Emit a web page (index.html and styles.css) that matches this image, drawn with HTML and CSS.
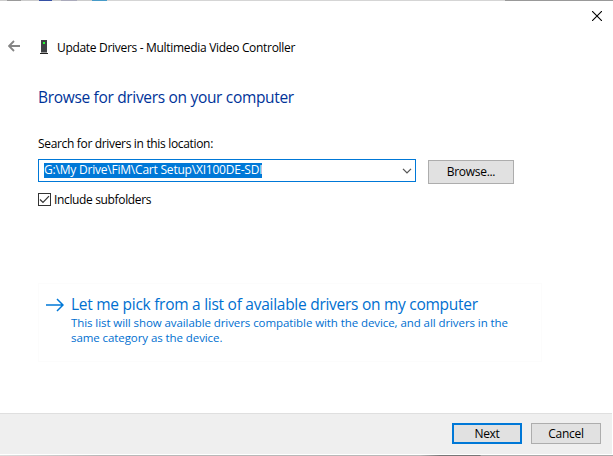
FILE: index.html
```html
<!DOCTYPE html>
<html lang="en">
<head>
<meta charset="utf-8">
<title>Update Drivers</title>
<link rel="stylesheet" href="styles.css">
</head>
<body>
<div class="strip-top"></div>
<main class="dialog">
  <div class="titlebar">
    <button class="close" aria-label="Close"><svg width="10" height="10" viewBox="0 0 10 10"><path d="M0 0L10 10M10 0L0 10"/></svg></button>
  </div>
  <header class="header">
    <svg class="back" width="12" height="12" viewBox="0 0 12 12"><path d="M12 6H1M6 1L1 6L6 11"/></svg>
    <svg class="device" width="8" height="14" viewBox="0 0 8 14" shape-rendering="crispEdges"><path fill="#3e4144" d="M1 0H7V12H1Z"/><path fill="#222" d="M0 13H8V14H0Z"/><path fill="#999" d="M1 12H7V13H1Z"/><path fill="#22ff33" d="M3 2H5V4H3Z"/></svg>
    <span class="title">Update Drivers - Multimedia Video Controller</span>
  </header>
  <section class="content">
    <h1 class="heading"><span>Browse for drivers on your computer</span></h1>
    <label class="label"><span>Search for drivers in this location:</span></label>
    <div class="row">
      <div class="combo"><span class="selected">G:\My Drive\FiM\Cart Setup\XI100DE-SDI</span>
        <svg width="10" height="6" viewBox="0 0 10 6"><path d="M1 .9L5 4.9L9 .9"/></svg></div>
      <button class="btn browse"><span>Browse...</span></button>
    </div>
    <div class="check"><span class="box"><svg width="11" height="11" viewBox="0 0 11 11"><path d="M1 5.5L4 8.5L10 2.2"/></svg></span><span class="check-text">Include subfolders</span></div>
    <div class="command">
      <svg width="18" height="14" viewBox="0 0 18 14"><path d="M0 7H17M11 1L17 7L11 13"/></svg>
      <div class="command-body">
        <div class="command-title"><span>Let me pick from a list of available drivers on my computer</span></div>
        <div class="note"><span class="n1">This list will show available drivers compatible with the device, and all drivers in the</span><br><span class="n2">same category as the device.</span></div>
      </div>
    </div>
  </section>
</main>
<footer class="footer">
  <button class="btn primary"><span>Next</span></button>
  <button class="btn cancel"><span>Cancel</span></button>
</footer>
<div class="strip-bottom"></div>
</body>
</html>
```
FILE: styles.css
```css
* { box-sizing: border-box; }
body { margin: 0; width: 613px; height: 456px; overflow: hidden; background: #fff; color: #000; font: 12px/15px "Open Sans", "Noto Sans", sans-serif; display: flex; flex-direction: column; white-space: nowrap; }
svg { display: block; fill: none; flex: none; }
button { font: inherit; color: inherit; padding: 0; }
.strip-top { height: 1px; flex: none; background: linear-gradient(90deg, #ccc 7px, #999 7px 21px, #ccc 21px 39px, #3550a5 39px 52px, #ccc 52px 61px, #aab 61px 77px, #ccc 77px 92px, #479bc8 92px 107px, #d5d5d5 107px 505px, #999 505px); }
.dialog { height: 412px; flex: none; }
.titlebar { height: 36px; display: flex; justify-content: flex-end; padding: 10px 11px 0 0; }
.close { width: 10px; height: 10px; border: 0; background: none; }
.close path { stroke: #000; stroke-width: 1.1; }
.header { display: flex; align-items: center; height: 20px; padding-left: 8px; }
.back { margin-top: -2px; }
.back path { stroke: #858585; stroke-width: 1.8; }
.device { margin: 0 9px 0 20px; }
.title { letter-spacing: -.31px; }
.content { padding: 28px 0 0 38px; }
.heading { margin: 0; font-size: 15.5px; line-height: 24px; font-weight: 400; color: #003399; letter-spacing: -.32px; }
.label { display: block; margin-top: 27px; letter-spacing: -.33px; }
.row { display: flex; gap: 12px; margin-top: 8px; height: 25px; }
.combo { width: 378px; height: 23px; border: 1px solid #0078d7; display: flex; align-items: center; justify-content: space-between; padding: 0 3px 1px 5px; }
.combo path { stroke: #555; stroke-width: 1.3; }
.combo svg { margin-top: 2px; }
.selected { background: #0078d7; color: #fff; height: 15px; line-height: 14px; letter-spacing: -.21px; }
.btn { border: 1px solid #adadad; background: #e1e1e1; letter-spacing: -.3px; }
.browse { width: 86px; height: 24px; margin-top: 1px; padding-bottom: 1px; }
.check { display: flex; align-items: center; gap: 3px; height: 15px; margin-top: 8px; letter-spacing: -.35px; }
.box { width: 13px; height: 13px; border: 1px solid #333; }
.box path { stroke: #333; stroke-width: 1.2; }
.command { width: 504px; height: 79px; margin-top: 76px; border: 1px solid #fcfcfc; display: flex; gap: 7px; padding: 10px 0 0 7px; color: #006fd0; }
.command svg { margin-top: 4px; }
.command path { stroke: #0078d7; stroke-width: 1.5; }
.command-title { font-size: 15.5px; line-height: 21px; letter-spacing: -.27px; }
.note { font-size: 11.5px; line-height: 15px; letter-spacing: -.08px; }
.footer { height: 41px; width: 612px; flex: none; background: #efefef; border-top: 1px solid #dfdfdf; display: flex; justify-content: flex-end; gap: 9px; padding: 9px 11px 0 0; }
.footer .btn { width: 70px; height: 21px; }
.footer .primary { border: 2px solid #0078d7; }
.strip-bottom { height: 1px; margin-top: 1px; flex: none; background: linear-gradient(90deg, #ddd, #b8b8b8 100px 420px, #777 440px 480px, #aaa 481px); }
```
